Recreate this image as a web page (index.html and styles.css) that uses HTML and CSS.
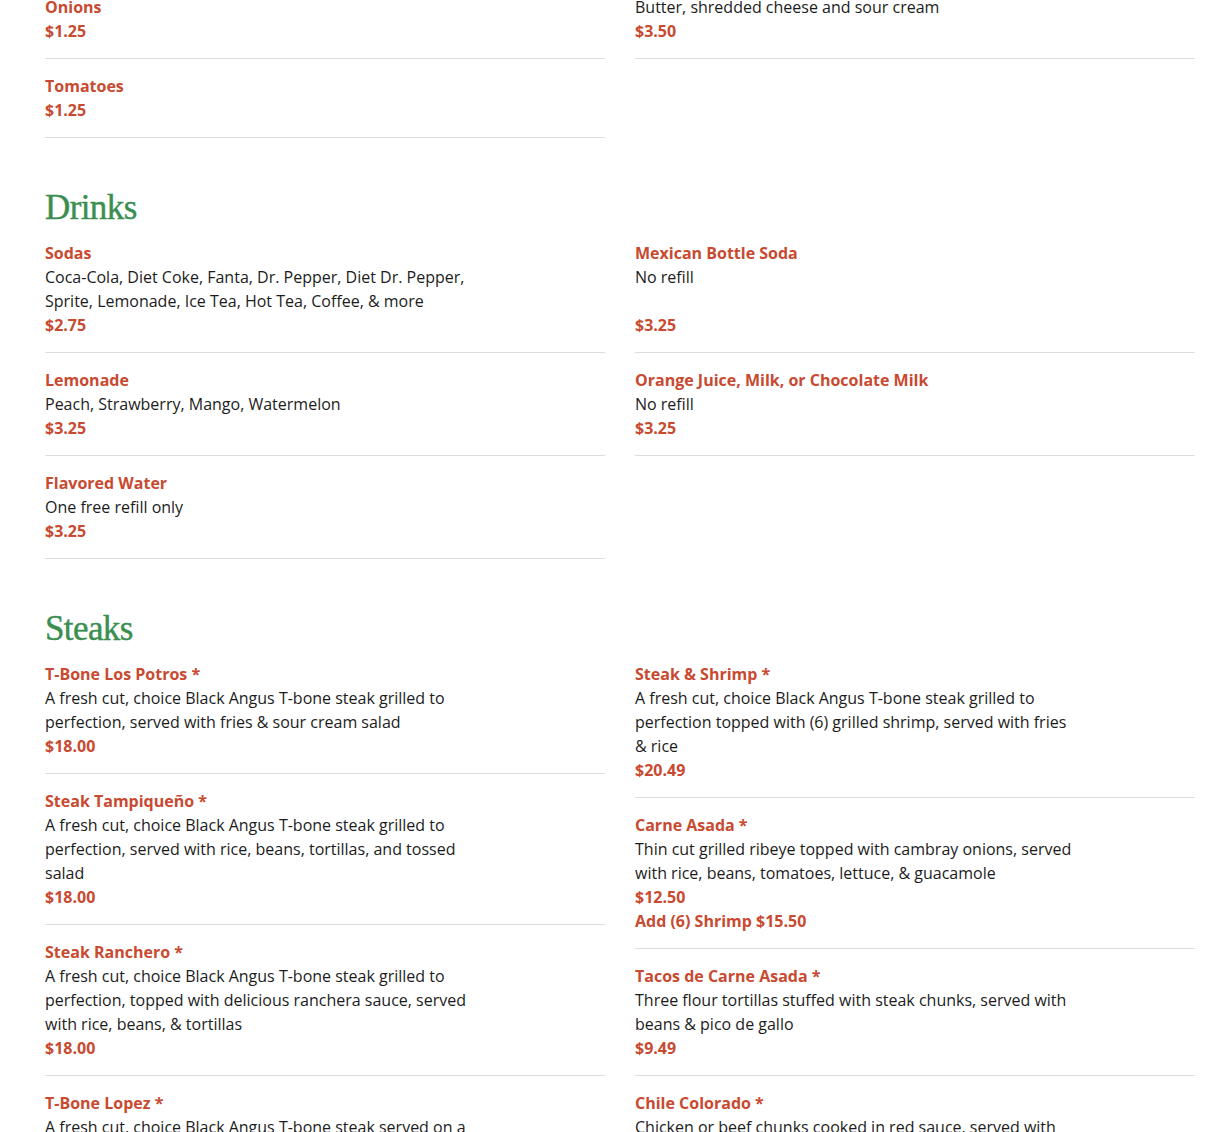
FILE: index.html
```html
<!DOCTYPE html>
<html lang="en">
<head>
<meta charset="utf-8">
<title>Menu</title>
<link rel="stylesheet" href="styles.css">
</head>
<body>
<main class="menu">
  <section class="section">
    <h2 class="section-title">Sides</h2>
    <div class="columns">
      <div class="col">
        <div class="item">
          <div class="item-title">Guacamole</div>
          <div class="item-desc">Side order</div>
          <div class="item-price">$3.00</div>
        </div>
        <div class="item">
          <div class="item-title">Onions</div>
          <div class="item-price">$1.25</div>
        </div>
        <div class="item">
          <div class="item-title">Tomatoes</div>
          <div class="item-price">$1.25</div>
        </div>
      </div>
      <div class="col">
        <div class="item">
          <div class="item-title">Jalapeños</div>
          <div class="item-price">$1.25</div>
        </div>
        <div class="item">
          <div class="item-title">Baked Potato</div>
          <div class="item-desc">Butter, shredded cheese and sour cream</div>
          <div class="item-price">$3.50</div>
        </div>
      </div>
    </div>
  </section>

  <section class="section">
    <h2 class="section-title">Drinks</h2>
    <div class="columns">
      <div class="col">
        <div class="item">
          <div class="item-title">Sodas</div>
          <div class="item-desc">Coca-Cola, Diet Coke, Fanta, Dr. Pepper, Diet Dr. Pepper, Sprite, Lemonade, Ice Tea, Hot Tea, Coffee, &amp; more</div>
          <div class="item-price">$2.75</div>
        </div>
        <div class="item">
          <div class="item-title">Lemonade</div>
          <div class="item-desc">Peach, Strawberry, Mango, Watermelon</div>
          <div class="item-price">$3.25</div>
        </div>
        <div class="item">
          <div class="item-title">Flavored Water</div>
          <div class="item-desc">One free refill only</div>
          <div class="item-price">$3.25</div>
        </div>
      </div>
      <div class="col">
        <div class="item">
          <div class="item-title">Mexican Bottle Soda</div>
          <div class="item-desc">No refill<br>&nbsp;</div>
          <div class="item-price">$3.25</div>
        </div>
        <div class="item">
          <div class="item-title">Orange Juice, Milk, or Chocolate Milk</div>
          <div class="item-desc">No refill</div>
          <div class="item-price">$3.25</div>
        </div>
      </div>
    </div>
  </section>

  <section class="section">
    <h2 class="section-title">Steaks</h2>
    <div class="columns">
      <div class="col">
        <div class="item">
          <div class="item-title">T-Bone Los Potros *</div>
          <div class="item-desc">A fresh cut, choice Black Angus T-bone steak grilled to perfection, served with fries &amp; sour cream salad</div>
          <div class="item-price">$18.00</div>
        </div>
        <div class="item">
          <div class="item-title">Steak Tampiqueño *</div>
          <div class="item-desc">A fresh cut, choice Black Angus T-bone steak grilled to perfection, served with rice, beans, tortillas, and tossed salad</div>
          <div class="item-price">$18.00</div>
        </div>
        <div class="item">
          <div class="item-title">Steak Ranchero *</div>
          <div class="item-desc">A fresh cut, choice Black Angus T-bone steak grilled to perfection, topped with delicious ranchera sauce, served with rice, beans, &amp; tortillas</div>
          <div class="item-price">$18.00</div>
        </div>
        <div class="item">
          <div class="item-title">T-Bone Lopez *</div>
          <div class="item-desc">A fresh cut, choice Black Angus T-bone steak served on a bed of grilled onions, served with rice &amp; beans</div>
          <div class="item-price">$18.00</div>
        </div>
      </div>
      <div class="col">
        <div class="item">
          <div class="item-title">Steak &amp; Shrimp *</div>
          <div class="item-desc">A fresh cut, choice Black Angus T-bone steak grilled to perfection topped with (6) grilled shrimp, served with fries &amp; rice</div>
          <div class="item-price">$20.49</div>
        </div>
        <div class="item">
          <div class="item-title">Carne Asada *</div>
          <div class="item-desc">Thin cut grilled ribeye topped with cambray onions, served with rice, beans, tomatoes, lettuce, &amp; guacamole</div>
          <div class="item-price">$12.50</div>
          <div class="item-price">Add (6) Shrimp $15.50</div>
        </div>
        <div class="item">
          <div class="item-title">Tacos de Carne Asada *</div>
          <div class="item-desc">Three flour tortillas stuffed with steak chunks, served with beans &amp; pico de gallo</div>
          <div class="item-price">$9.49</div>
        </div>
        <div class="item">
          <div class="item-title">Chile Colorado *</div>
          <div class="item-desc">Chicken or beef chunks cooked in red sauce, served with rice, beans, &amp; tortillas</div>
          <div class="item-price">$12.50</div>
        </div>
      </div>
    </div>
  </section>
</main>
</body>
</html>
```

FILE: styles.css
```css
html, body {
  margin: 0;
  padding: 0;
  background: #ffffff;
}

body {
  font-family: "Open Sans", "Liberation Sans", sans-serif;
  font-size: 16px;
  line-height: 24px;
  color: #1c1c1c;
}

.menu {
  width: 1150px;
  margin: -161px 0 0 45px;
}

.section {
  margin-top: 35px;
}

.section:first-child {
  margin-top: 0;
}

.section-title {
  margin: 0 0 13px;
  font-family: "Liberation Serif", "DejaVu Serif", serif;
  font-weight: normal;
  font-size: 35px;
  line-height: 40px;
  color: #3a8e50;
  letter-spacing: -0.6px;
  -webkit-text-stroke: 0.4px #3a8e50;
}

.columns {
  display: flex;
  gap: 30px;
  align-items: flex-start;
}

.col {
  flex: 1 1 0;
  min-width: 0;
  display: flex;
  flex-direction: column;
}

.item {
  padding-bottom: 15px;
  border-bottom: 1px solid #dcdcdc;
  margin-bottom: 15px;
}

.item-title,
.item-price {
  font-weight: 700;
  color: #c84a30;
}

.item-desc {
  max-width: 440px;
}
```
